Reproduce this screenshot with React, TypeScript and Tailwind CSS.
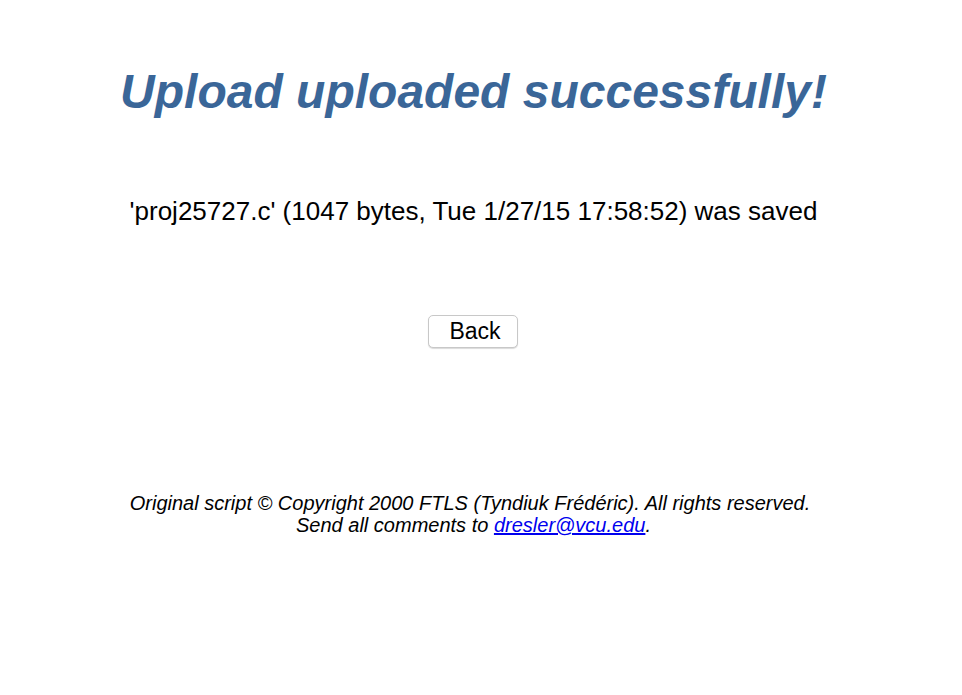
export default function App() {
  return (
    <div className="w-[947px] bg-white text-center text-black font-['Liberation_Sans',Arial,sans-serif] min-h-[695px]">
      <h1 className="pt-[62px] text-[48px] leading-[60px] font-bold italic text-[#3a6698]">
        Upload uploaded successfully!
      </h1>
      <p className="mt-[75px] text-[26px] leading-[28px]">
        'proj25727.c' (1047 bytes, Tue 1/27/15 17:58:52) was saved
      </p>
      <div className="mt-[90px] flex justify-center">
        <button className="w-[90px] h-[33px] pl-[5px] rounded-[5px] border border-[#c8c8c8] bg-white text-[23px] leading-none shadow-[0_1px_1px_rgba(0,0,0,0.15)] -translate-x-px">
          Back
        </button>
      </div>
      <div className="mt-[144px] text-[20px] leading-[22px] italic">
        <p className="pr-[7px]">Original script © Copyright 2000 FTLS (Tyndiuk Frédéric). All rights reserved.</p>
        <p>
          Send all comments to{' '}
          <a href="#" className="text-[#0000ee] underline">dresler@vcu.edu</a>.
        </p>
      </div>
    </div>
  )
}
